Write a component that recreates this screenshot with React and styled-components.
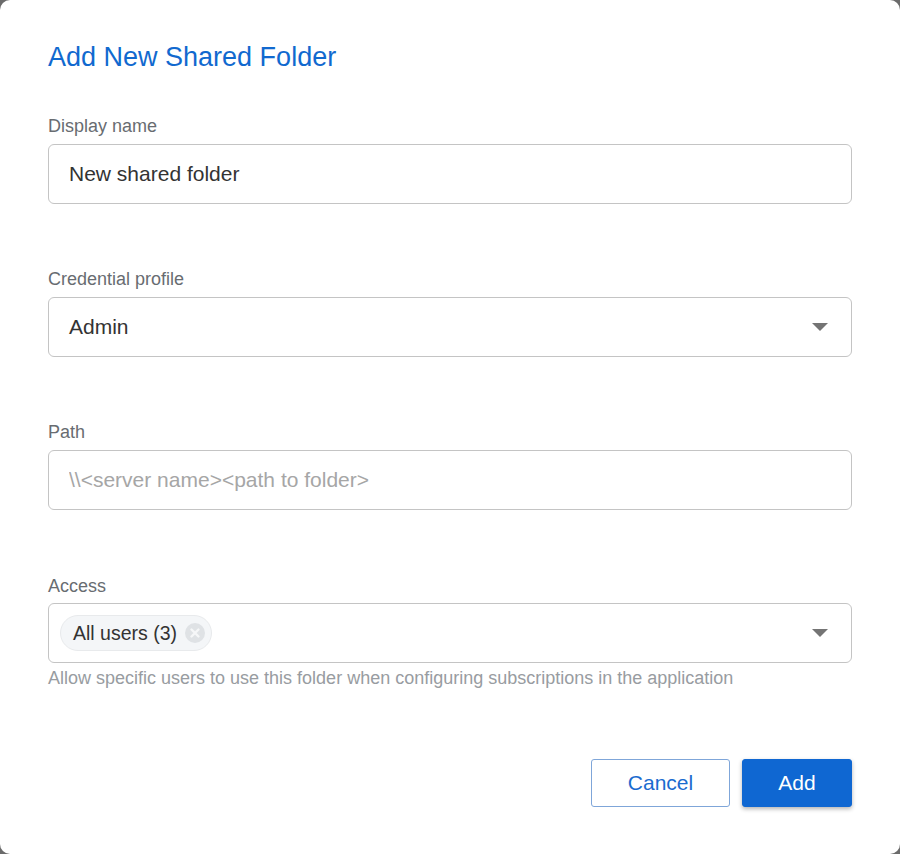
import React from "react";
import styled, { createGlobalStyle } from "styled-components";

const Global = createGlobalStyle`
  html, body { margin: 0; padding: 0; background: #6b6b6b; }
  * { box-sizing: border-box; }
`;

const Dialog = styled.div`
  width: 900px;
  height: 854px;
  background: #fff;
  border-radius: 10px;
  padding: 40px 48px 0;
  font-family: "Liberation Sans", Arial, sans-serif;
  display: flex;
  flex-direction: column;
`;

const Title = styled.h1`
  margin: 0 0 41px;
  font-size: 27px;
  line-height: 34px;
  font-weight: 400;
  color: #1169cf;
`;

const Field = styled.div`
  display: flex;
  flex-direction: column;
  height: 153px;
`;

const AccessField = styled(Field)`
  height: 185px;
`;

const Label = styled.label`
  font-size: 18px;
  line-height: 22px;
  height: 29px;
  padding-top: ${(p) => p.$offset || "0"};
  color: #686c71;
`;

const Box = styled.div`
  height: 60px;
  flex: none;
  border: 1px solid #c4c4c4;
  border-radius: 6px;
  background: #fff;
  display: flex;
  align-items: center;
  justify-content: space-between;
  padding: 0 23px 0 20px;
  font-size: 21px;
  color: #333;
`;

const TextInput = styled.input`
  height: 60px;
  flex: none;
  width: 100%;
  border: 1px solid #c4c4c4;
  border-radius: 6px;
  background: #fff;
  padding: 0 20px;
  font-family: inherit;
  font-size: 21px;
  color: #333;
  outline: none;
  &::placeholder { color: #a6a6a6; opacity: 1; }
`;

const Caret = styled.span`
  width: 0;
  height: 0;
  border-left: 8px solid transparent;
  border-right: 8px solid transparent;
  border-top: 8px solid #747474;
`;

const Chip = styled.div`
  display: inline-flex;
  align-items: center;
  height: 36px;
  margin-left: -9px;
  padding: 0 6px 0 12px;
  gap: 8px;
  border: 1px solid #e8eaec;
  border-radius: 18px;
  background: #f4f6f8;
  font-size: 19.5px;
  color: #333;
`;

const ChipClose = styled.svg`
  width: 20px;
  height: 20px;
  display: block;
`;

const Help = styled.div`
  font-size: 18px;
  line-height: 22px;
  margin-top: 4px;
  color: #989ca1;
`;

const Actions = styled.div`
  display: flex;
  justify-content: flex-end;
  gap: 12px;
`;

const Button = styled.button`
  height: 48px;
  width: ${(p) => (p.$primary ? "110px" : "139px")};
  border-radius: 3px;
  font-family: inherit;
  font-size: 21px;
  cursor: pointer;
  border: 1px solid ${(p) => (p.$primary ? "#0f67d2" : "#7fa6d9")};
  background: ${(p) => (p.$primary ? "#0f67d2" : "#fff")};
  color: ${(p) => (p.$primary ? "#fff" : "#1a6bcf")};
  box-shadow: ${(p) => (p.$primary ? "0 2px 4px rgba(0,0,0,.3)" : "none")};
`;

export default function App() {
  return (
    <Dialog>
      <Global />
      <Title>Add New Shared Folder</Title>
      <Field>
        <Label>Display name</Label>
        <TextInput readOnly value="New shared folder" />
      </Field>
      <Field>
        <Label>Credential profile</Label>
        <Box>
          Admin
          <Caret />
        </Box>
      </Field>
      <Field>
        <Label>Path</Label>
        <TextInput readOnly placeholder="\\<server name><path to folder>" />
      </Field>
      <AccessField>
        <Label $offset="1px">Access</Label>
        <Box>
          <Chip>
            All users (3)
            <ChipClose viewBox="0 0 20 20">
              <circle cx="10" cy="10" r="10" fill="#dfe2e5" />
              <path d="M6.5 6.5l7 7M13.5 6.5l-7 7" stroke="#f6f7f8" strokeWidth="2.4" strokeLinecap="round" />
            </ChipClose>
          </Chip>
          <Caret />
        </Box>
        <Help>Allow specific users to use this folder when configuring subscriptions in the application</Help>
      </AccessField>
      <Actions>
        <Button>Cancel</Button>
        <Button $primary>Add</Button>
      </Actions>
    </Dialog>
  );
}
